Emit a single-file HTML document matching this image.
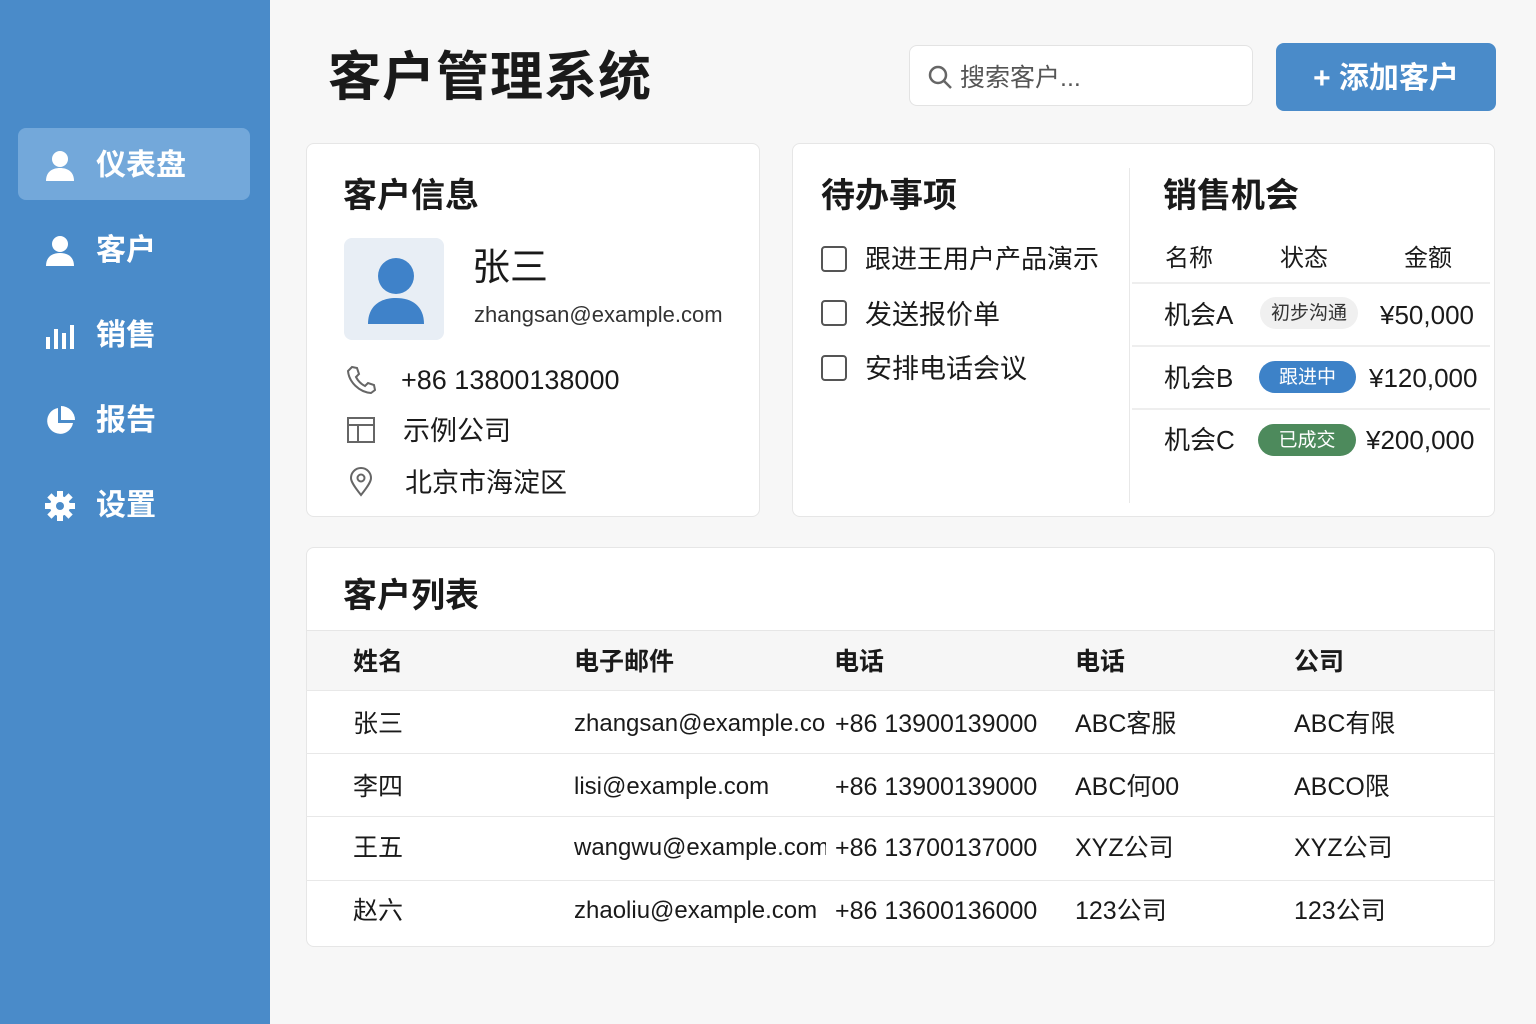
<!DOCTYPE html>
<html><head><meta charset="utf-8"><style>
*{box-sizing:border-box;margin:0;padding:0}
body{width:1536px;height:1024px;background:#f7f7f7;font-family:"Liberation Sans","Noto Sans CJK SC",sans-serif;color:#1a1a1a;position:relative;overflow:hidden}
.side{position:absolute;left:0;top:0;width:270px;height:1024px;background:#4a8bc9}
.nav{position:absolute;left:18px;width:232px;height:72px;display:flex;align-items:center;color:#fff;font-size:30px;font-weight:bold;line-height:1;padding-top:3px}
.nav.act{background:#73a8da;border-radius:8px}
.nav .ic{width:40px;margin-left:22px;margin-right:16px;display:flex;justify-content:center}
.card{position:absolute;background:#fff;border:1px solid #e6e6e6;border-radius:8px}
.abs{position:absolute;white-space:nowrap;line-height:1.3}
h1{position:absolute;left:328px;top:46px;font-size:53px;font-weight:bold;letter-spacing:1px;line-height:1.22}
.h2{font-size:34px;font-weight:bold}
.cb{position:absolute;width:26px;height:26px;border:2px solid #555;border-radius:4px}
.pill{position:absolute;height:32px;border-radius:16px;font-size:19px;display:flex;align-items:center;justify-content:center;line-height:1}
.row{position:absolute;left:306px;width:1188px;height:1px;background:#e8e8e8}
.t{position:absolute;font-size:25px;white-space:nowrap;line-height:1.3;overflow:hidden}
.e{font-size:24px;width:252px}
</style></head><body>
<div class="side">
<div class="nav act" style="top:128px"><div class="ic"><svg width="30" height="32" viewBox="0 0 30 32"><circle cx="15" cy="9" r="8" fill="#fff"/><path d="M1 31c0-9 6-13 14-13s14 4 14 13z" fill="#fff"/></svg></div>仪表盘</div>
<div class="nav" style="top:213px"><div class="ic"><svg width="30" height="32" viewBox="0 0 30 32"><circle cx="15" cy="9" r="8" fill="#fff"/><path d="M1 31c0-9 6-13 14-13s14 4 14 13z" fill="#fff"/></svg></div>客户</div>
<div class="nav" style="top:298px"><div class="ic"><svg width="30" height="26" viewBox="0 0 30 26"><rect x="1" y="14" width="4" height="12" fill="#fff"/><rect x="9" y="6" width="4" height="20" fill="#fff"/><rect x="17" y="10" width="4" height="16" fill="#fff"/><rect x="25" y="2" width="4" height="24" fill="#fff"/></svg></div>销售</div>
<div class="nav" style="top:383px"><div class="ic"><svg width="30" height="30" viewBox="0 0 30 30"><path d="M13 2A13 13 0 1 0 28 17H13z" fill="#fff"/><path d="M16 0v14h14A14 14 0 0 0 16 0z" fill="#fff"/></svg></div>报告</div>
<div class="nav" style="top:468px"><div class="ic"><svg width="30" height="30" viewBox="0 0 30 30"><g fill="#fff"><circle cx="15" cy="15" r="10"/><rect x="12" y="0" width="6" height="30"/><rect x="0" y="12" width="30" height="6"/><rect x="12" y="0" width="6" height="30" transform="rotate(45 15 15)"/><rect x="12" y="0" width="6" height="30" transform="rotate(-45 15 15)"/></g><circle cx="15" cy="15" r="4" fill="#4a8bc9"/></svg></div>设置</div>
</div>

<h1>客户管理系统</h1>
<div class="abs" style="left:909px;top:45px;width:344px;height:61px;background:#fff;border:1px solid #e3e3e3;border-radius:8px"></div>
<svg class="abs" style="left:927px;top:64px" width="26" height="26" viewBox="0 0 26 26"><circle cx="11" cy="11" r="8" stroke="#666" stroke-width="2.5" fill="none"/><path d="M17 17l7 7" stroke="#666" stroke-width="2.5"/></svg>
<div class="abs" style="left:960px;top:62px;font-size:25px;color:#555">搜索客户...</div>
<div class="abs" style="left:1276px;top:43px;width:220px;height:68px;background:#4a8bc9;border-radius:8px;color:#fff;font-size:30px;font-weight:bold;display:flex;align-items:center;justify-content:center;padding-top:2px">+ 添加客户</div>

<div class="card" style="left:306px;top:143px;width:454px;height:374px"></div>
<div class="abs h2" style="left:343px;top:174px">客户信息</div>
<div class="abs" style="left:344px;top:238px;width:100px;height:102px;background:#e8eef5;border-radius:8px"></div>
<svg class="abs" style="left:366px;top:256px" width="60" height="70" viewBox="0 0 60 70"><circle cx="30" cy="20" r="18" fill="#3f82c9"/><path d="M2 68c0-18 12-26 28-26s28 8 28 26z" fill="#3f82c9"/></svg>
<div class="abs" style="left:472px;top:244px;font-size:38px">张三</div>
<div class="abs" style="left:474px;top:301px;font-size:22px;color:#333">zhangsan@example.com</div>
<svg class="abs" style="left:346px;top:365px" width="30" height="30" viewBox="0 0 30 30"><path d="M6 2l5 1 2 6-3 3c2 4 5 7 9 9l3-3 6 2 1 5-4 3C13 27 3 17 2 6z" stroke="#666" stroke-width="2" fill="none"/></svg>
<div class="abs" style="left:401px;top:363px;font-size:27px">+86 13800138000</div>
<svg class="abs" style="left:347px;top:417px" width="28" height="26" viewBox="0 0 28 26"><rect x="1" y="1" width="26" height="24" stroke="#666" stroke-width="2" fill="none"/><path d="M1 8h26M11 8v17" stroke="#666" stroke-width="2"/></svg>
<div class="abs" style="left:403px;top:414px;font-size:27px">示例公司</div>
<svg class="abs" style="left:349px;top:467px" width="24" height="30" viewBox="0 0 24 30"><path d="M12 28C4 18 2 14 2 11a10 10 0 0 1 20 0c0 3-2 7-10 17z" stroke="#666" stroke-width="2" fill="none"/><circle cx="12" cy="11" r="3.5" stroke="#666" stroke-width="2" fill="none"/></svg>
<div class="abs" style="left:405px;top:466px;font-size:27px">北京市海淀区</div>

<div class="card" style="left:792px;top:143px;width:703px;height:374px"></div>
<div class="abs" style="left:1129px;top:168px;width:1px;height:335px;background:#e8e8e8"></div>
<div class="abs h2" style="left:821px;top:174px">待办事项</div>
<div class="cb" style="left:821px;top:246px"></div><div class="abs" style="left:865px;top:243px;font-size:26px">跟进王用户产品演示</div>
<div class="cb" style="left:821px;top:300px"></div><div class="abs" style="left:865px;top:298px;font-size:27px">发送报价单</div>
<div class="cb" style="left:821px;top:355px"></div><div class="abs" style="left:865px;top:352px;font-size:27px">安排电话会议</div>
<div class="abs h2" style="left:1163px;top:174px">销售机会</div>
<div class="abs" style="left:1165px;top:243px;font-size:24px">名称</div>
<div class="abs" style="left:1280px;top:243px;font-size:24px">状态</div>
<div class="abs" style="left:1404px;top:243px;font-size:24px">金额</div>
<div class="abs" style="left:1132px;top:282px;width:358px;height:2px;background:#eee"></div>
<div class="abs" style="left:1132px;top:345px;width:358px;height:2px;background:#eee"></div>
<div class="abs" style="left:1132px;top:408px;width:358px;height:2px;background:#eee"></div>
<div class="abs" style="left:1164px;top:299px;font-size:26px">机会A</div>
<div class="pill" style="left:1260px;top:297px;width:98px;background:#f0f0f0;color:#333">初步沟通</div>
<div class="abs" style="left:1380px;top:299px;font-size:26px">¥50,000</div>
<div class="abs" style="left:1164px;top:362px;font-size:26px">机会B</div>
<div class="pill" style="left:1259px;top:361px;width:97px;background:#3d82c8;color:#fff">跟进中</div>
<div class="abs" style="left:1369px;top:362px;font-size:26px">¥120,000</div>
<div class="abs" style="left:1164px;top:424px;font-size:26px">机会C</div>
<div class="pill" style="left:1258px;top:424px;width:98px;background:#4d8a5c;color:#fff">已成交</div>
<div class="abs" style="left:1366px;top:424px;font-size:26px">¥200,000</div>

<div class="card" style="left:306px;top:547px;width:1189px;height:400px"></div>
<div class="abs h2" style="left:343px;top:574px">客户列表</div>
<div class="abs" style="left:307px;top:630px;width:1187px;height:60px;background:#f6f6f6;border-top:1px solid #e6e6e6"></div>
<div class="t" style="left:353px;top:646px;font-weight:bold">姓名</div>
<div class="t" style="left:574px;top:646px;font-weight:bold">电子邮件</div>
<div class="t" style="left:834px;top:646px;font-weight:bold">电话</div>
<div class="t" style="left:1075px;top:646px;font-weight:bold">电话</div>
<div class="t" style="left:1294px;top:646px;font-weight:bold">公司</div>
<div class="row" style="top:690px"></div><div class="row" style="top:753px"></div><div class="row" style="top:816px"></div><div class="row" style="top:880px"></div>
<div class="t" style="left:353px;top:708px">张三</div><div class="t e" style="left:574px;top:708px">zhangsan@example.co</div><div class="t" style="left:835px;top:708px">+86 13900139000</div><div class="t" style="left:1075px;top:708px">ABC客服</div><div class="t" style="left:1294px;top:708px">ABC有限</div>
<div class="t" style="left:353px;top:771px">李四</div><div class="t e" style="left:574px;top:771px">lisi@example.com</div><div class="t" style="left:835px;top:771px">+86 13900139000</div><div class="t" style="left:1075px;top:771px">ABC何00</div><div class="t" style="left:1294px;top:771px">ABCO限</div>
<div class="t" style="left:353px;top:832px">王五</div><div class="t e" style="left:574px;top:832px">wangwu@example.com</div><div class="t" style="left:835px;top:832px">+86 13700137000</div><div class="t" style="left:1075px;top:832px">XYZ公司</div><div class="t" style="left:1294px;top:832px">XYZ公司</div>
<div class="t" style="left:353px;top:895px">赵六</div><div class="t e" style="left:574px;top:895px">zhaoliu@example.com</div><div class="t" style="left:835px;top:895px">+86 13600136000</div><div class="t" style="left:1075px;top:895px">123公司</div><div class="t" style="left:1294px;top:895px">123公司</div>
</body></html>
